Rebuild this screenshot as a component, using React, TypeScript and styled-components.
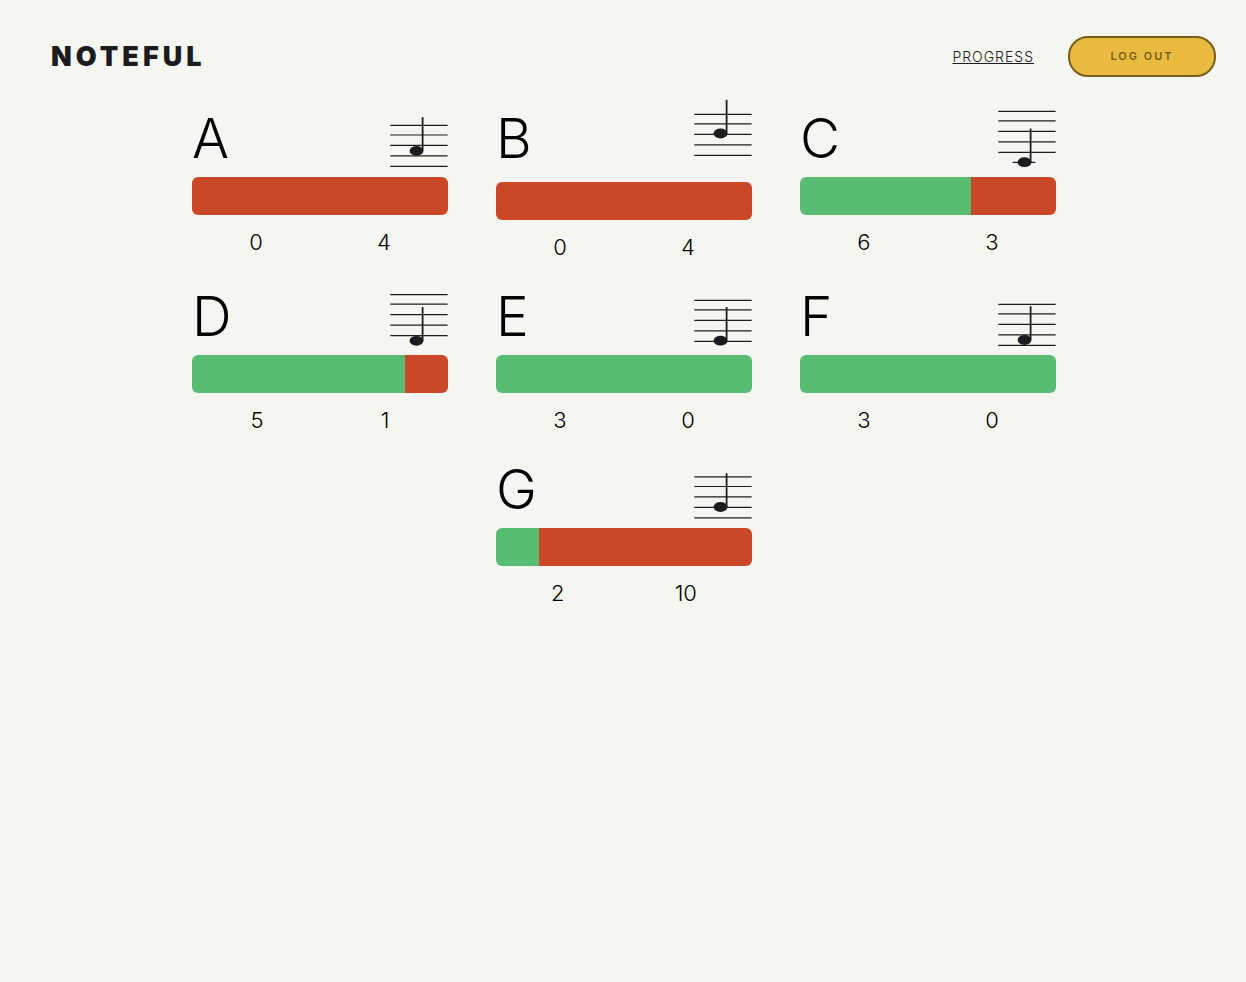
import React from 'react';
import styled, { createGlobalStyle } from 'styled-components';

const GlobalStyle = createGlobalStyle`
  *, *::before, *::after {
    box-sizing: border-box;
  }
  body {
    margin: 0;
    background: #f5f6f0;
    color: #000;
    font-family: Inter, 'Liberation Sans', sans-serif;
  }
`;

const Header = styled.header`
  display: flex;
  align-items: center;
  justify-content: space-between;
  padding: 36px 30px 22px 51px;
`;

const Brand = styled.h1`
  margin: 0;
  font-size: 27px;
  line-height: 40px;
  font-weight: 900;
  letter-spacing: 4px;
  color: #1c1c1e;
`;

const Nav = styled.nav`
  display: flex;
  align-items: center;
  gap: 34px;
`;

const NavLink = styled.a`
  font-size: 14px;
  line-height: 20px;
  font-weight: 300;
  letter-spacing: 1px;
  color: #1c1c1e;
  text-decoration: underline;
  text-underline-offset: 1px;
`;

const LogOutButton = styled.button`
  width: 148px;
  height: 41px;
  padding: 0 0 2px;
  border: 2px solid #775e19;
  border-radius: 20px;
  background: #e8bb40;
  color: #775e19;
  font-family: inherit;
  font-size: 11px;
  font-weight: 600;
  letter-spacing: 2px;
`;

const Main = styled.main`
  padding: 0 30px 0 32px;
`;

const Scores = styled.div`
  display: flex;
  flex-wrap: wrap;
  justify-content: center;
  column-gap: 48px;
  max-width: 864px;
  margin: 0 auto;
`;

const Card = styled.section`
  width: 256px;
`;

const CardTop = styled.div`
  display: flex;
  align-items: flex-start;
  justify-content: space-between;
`;

const Letter = styled.h2`
  margin: 0;
  font-size: 55px;
  line-height: 78px;
  font-weight: 300;
`;

const StaffDrawing = styled.svg`
  display: block;
  flex: none;
`;

const Bar = styled.div`
  display: flex;
  height: 38px;
  border-radius: 6px;
  overflow: hidden;
`;

const Segment = styled.div<{ $share: number; $tone: 'right' | 'wrong' }>`
  flex: ${({ $share }) => $share} 0 0px;
  background: ${({ $tone }) => ($tone === 'right' ? '#59bc73' : '#ca4827')};
`;

const Counts = styled.div`
  display: flex;
  justify-content: space-around;
  height: 57px;
  padding-top: 11px;
  font-size: 22px;
  line-height: 32px;
  font-weight: 300;
`;

type Note = {
  letter: string;
  right: number;
  wrong: number;
  staffTop: number;
  head: number;
  height?: number;
  ledger?: boolean;
};

const notes: Note[] = [
  { letter: 'A', right: 0, wrong: 4, staffTop: 26.4, head: 51.9 },
  { letter: 'B', right: 0, wrong: 4, staffTop: 15.3, head: 34.5, height: 83 },
  { letter: 'C', right: 6, wrong: 3, staffTop: 12.3, head: 63.2, ledger: true },
  { letter: 'D', right: 5, wrong: 1, staffTop: 17.6, head: 63.8 },
  { letter: 'E', right: 3, wrong: 0, staffTop: 23.3, head: 63.7 },
  { letter: 'F', right: 3, wrong: 0, staffTop: 27.3, head: 63 },
  { letter: 'G', right: 2, wrong: 10, staffTop: 26.9, head: 57 },
];

const lineOffsets = [0, 9.6, 20, 30.5, 41];

function Staff({ note }: { note: Note }) {
  const height = note.height ?? 78;
  return (
    <StaffDrawing width="58" height={height} viewBox={`0 0 58 ${height}`} aria-hidden="true">
      <g stroke="#1c1c1e" strokeWidth="1.2">
        {lineOffsets.map((y) => (
          <line key={y} x1="0.3" x2="57.6" y1={note.staffTop + y} y2={note.staffTop + y} />
        ))}
        {note.ledger && <line x1="14.6" x2="37.4" y1={note.head + 0.2} y2={note.head + 0.2} />}
      </g>
      <line x1="32.6" x2="32.6" y1={note.head - 33.7} y2={note.head} stroke="#1c1c1e" strokeWidth="1.8" />
      <ellipse cx="26.5" cy={note.head} rx="6.9" ry="4.9" fill="#1c1c1e" />
    </StaffDrawing>
  );
}

export default function App() {
  return (
    <>
      <GlobalStyle />
      <Header>
        <Brand>NOTEFUL</Brand>
        <Nav>
          <NavLink href="#progress">PROGRESS</NavLink>
          <LogOutButton type="button">LOG OUT</LogOutButton>
        </Nav>
      </Header>
      <Main>
        <Scores>
          {notes.map((note) => (
            <Card key={note.letter}>
              <CardTop>
                <Letter>{note.letter}</Letter>
                <Staff note={note} />
              </CardTop>
              <Bar>
                <Segment $share={note.right} $tone="right" />
                <Segment $share={note.wrong} $tone="wrong" />
              </Bar>
              <Counts>
                <span>{note.right}</span>
                <span>{note.wrong}</span>
              </Counts>
            </Card>
          ))}
        </Scores>
      </Main>
    </>
  );
}
